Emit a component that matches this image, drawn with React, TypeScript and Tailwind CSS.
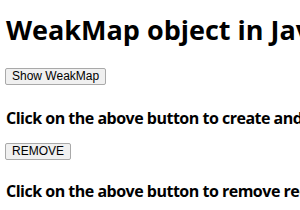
export default function App() {
  return (
    <div className="h-[210px] w-[300px] overflow-hidden whitespace-nowrap bg-white pl-[6px] text-black">
      <h1 className="mt-[15px] font-['Open_Sans',sans-serif] text-[27px] font-bold leading-[30px]">
        WeakMap object in JavaScript
      </h1>
      <button className="ml-[-1px] mt-[23px] block h-[17px] rounded-[2px] border border-[#a9a9a9] bg-[#f0f0f0] px-[6px] font-['Liberation_Sans',sans-serif] text-[12px] leading-[15px]">
        Show WeakMap
      </button>
      <p className="mt-[23px] font-['Open_Sans',sans-serif] text-[16px] font-bold leading-[20px] tracking-[-0.5px]">
        Click on the above button to create and display the WeakMap
      </p>
      <button className="ml-[-1px] mt-[15px] block h-[17px] rounded-[2px] border border-[#a9a9a9] bg-[#f0f0f0] px-[6px] font-['Liberation_Sans',sans-serif] text-[12px] leading-[15px]">
        REMOVE
      </button>
      <p className="mt-[21px] font-['Open_Sans',sans-serif] text-[16px] font-bold leading-[20px] tracking-[-0.5px]">
        Click on the above button to remove recently added key
      </p>
    </div>
  );
}
